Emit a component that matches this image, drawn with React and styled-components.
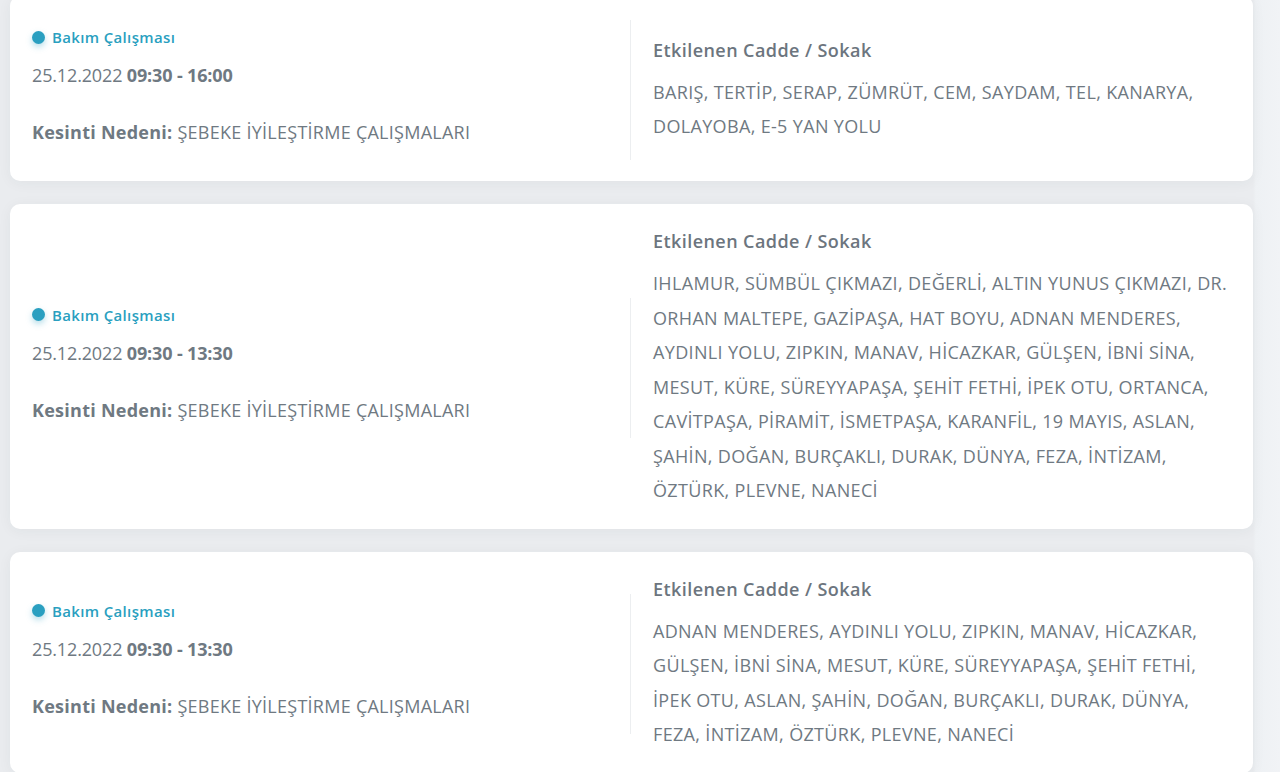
import React from 'react'
import styled, { createGlobalStyle } from 'styled-components'

const GlobalStyle = createGlobalStyle`
  html, body {
    margin: 0;
    padding: 0;
    background: #eaecef;
    font-family: "Open Sans", "Noto Sans", sans-serif;
    color: #6f7982;
    overflow: hidden;
  }
`

const Page = styled.div`
  height: 772px;
  overflow: hidden;
  padding-right: 27px;
  background: linear-gradient(to right, #eaecef 0, #eaecef 1253px, #eef1f4 1256px, #f1f3f6 100%);
`

const List = styled.div`
  display: flex;
  flex-direction: column;
  gap: 23px;
  margin-top: -4px;
  padding-left: 10px;
`

const Card = styled.div`
  background: #fff;
  border-radius: 10px;
  box-shadow: 0 2px 14px rgba(40, 50, 60, 0.05);
  padding: 24px 23px 21px 22px;
  display: flex;
  align-items: center;
`

const Left = styled.div`
  flex: 0 0 50%;
  height: 140px;
  box-sizing: border-box;
  border-right: 1px solid #eceef0;
  padding-top: 6px;
`

const Right = styled.div`
  flex: 0 0 50%;
  box-sizing: border-box;
  padding-left: 22px;
`

const Status = styled.div`
  display: flex;
  align-items: center;
  gap: 7px;
  font-size: 15px;
  line-height: 22px;
  font-weight: 600;
  letter-spacing: 0.35px;
  color: #2a9fc0;
`

const Dot = styled.span`
  width: 13px;
  height: 13px;
  border-radius: 50%;
  background: #2a9fc0;
  box-shadow: 0 3px 6px rgba(42, 159, 192, 0.35);
`

const DateLine = styled.div`
  margin-top: 13px;
  font-size: 18px;
  line-height: 28px;
  letter-spacing: -0.15px;
  b {
    font-weight: 700;
  }
`

const Reason = styled.div`
  margin-top: 29px;
  font-size: 18px;
  line-height: 28px;
  letter-spacing: 0.26px;
  b {
    font-weight: 700;
  }
`

const Heading = styled.div`
  font-size: 18px;
  line-height: 26px;
  font-weight: 600;
  letter-spacing: 0.43px;
  color: #6c757e;
`

const Streets = styled.div`
  margin-top: 12px;
  font-size: 18px;
  line-height: 34.5px;
  letter-spacing: 0.34px;
`

const outages = [
  {
    time: '09:30 - 16:00',
    streets: 'BARIŞ, TERTİP, SERAP, ZÜMRÜT, CEM, SAYDAM, TEL, KANARYA, DOLAYOBA, E-5 YAN YOLU',
  },
  {
    time: '09:30 - 13:30',
    streets:
      'IHLAMUR, SÜMBÜL ÇIKMAZI, DEĞERLİ, ALTIN YUNUS ÇIKMAZI, DR. ORHAN MALTEPE, GAZİPAŞA, HAT BOYU, ADNAN MENDERES, AYDINLI YOLU, ZIPKIN, MANAV, HİCAZKAR, GÜLŞEN, İBNİ SİNA, MESUT, KÜRE, SÜREYYAPAŞA, ŞEHİT FETHİ, İPEK OTU, ORTANCA, CAVİTPAŞA, PİRAMİT, İSMETPAŞA, KARANFİL, 19 MAYIS, ASLAN, ŞAHİN, DOĞAN, BURÇAKLI, DURAK, DÜNYA, FEZA, İNTİZAM, ÖZTÜRK, PLEVNE, NANECİ',
  },
  {
    time: '09:30 - 13:30',
    streets:
      'ADNAN MENDERES, AYDINLI YOLU, ZIPKIN, MANAV, HİCAZKAR, GÜLŞEN, İBNİ SİNA, MESUT, KÜRE, SÜREYYAPAŞA, ŞEHİT FETHİ, İPEK OTU, ASLAN, ŞAHİN, DOĞAN, BURÇAKLI, DURAK, DÜNYA, FEZA, İNTİZAM, ÖZTÜRK, PLEVNE, NANECİ',
  },
]

const App = () => (
  <Page>
    <GlobalStyle />
    <List>
      {outages.map((item, index) => (
        <Card key={index}>
          <Left>
            <Status>
              <Dot />
              Bakım Çalışması
            </Status>
            <DateLine>
              25.12.2022 <b>{item.time}</b>
            </DateLine>
            <Reason>
              <b>Kesinti Nedeni:</b> ŞEBEKE İYİLEŞTİRME ÇALIŞMALARI
            </Reason>
          </Left>
          <Right>
            <Heading>Etkilenen Cadde / Sokak</Heading>
            <Streets>{item.streets}</Streets>
          </Right>
        </Card>
      ))}
    </List>
  </Page>
)

export default App
